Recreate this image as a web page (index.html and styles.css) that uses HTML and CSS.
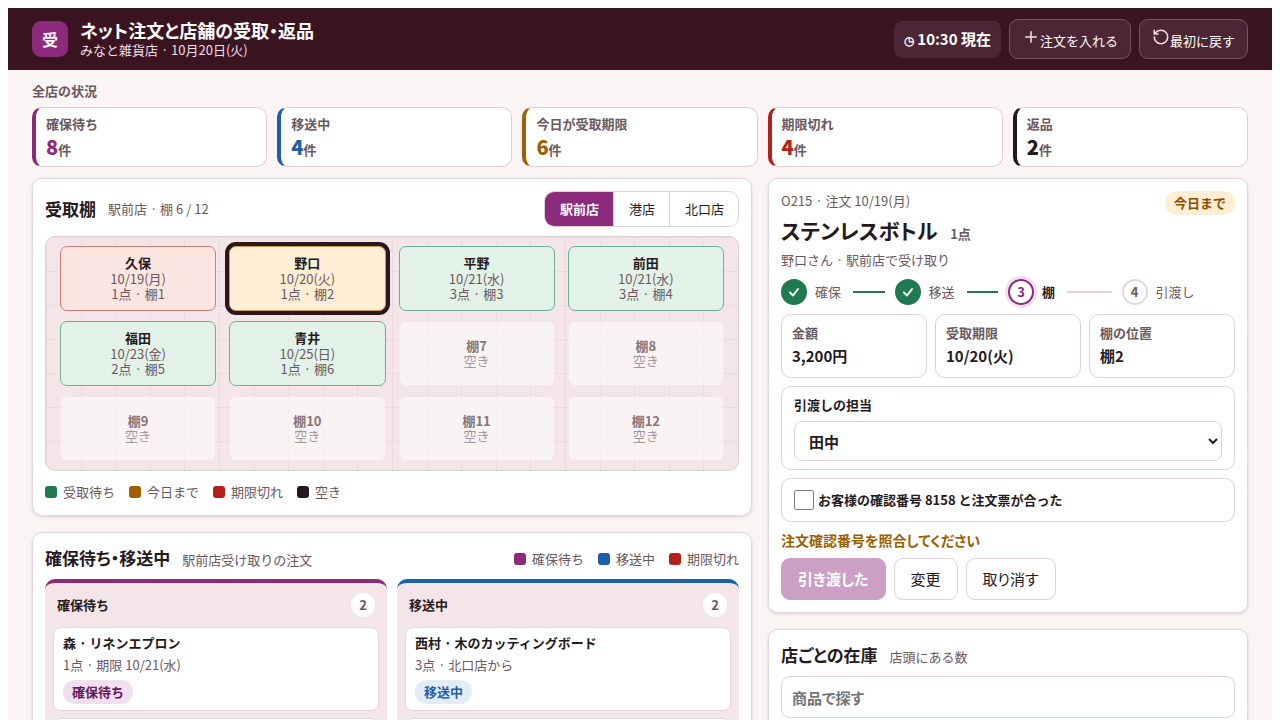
FILE: index.html
```html
<!DOCTYPE html>
<html lang="ja">
<head>
<meta charset="utf-8">
<meta name="viewport" content="width=device-width, initial-scale=1">
<title>ネット注文と店舗の受取・返品</title>
<link rel="stylesheet" href="styles.css">
</head>
<body>
<div class="app">
  <header class="topbar">
    <div class="logo">受</div>
    <div class="brand">
      <h1 class="brand-title">ネット注文と店舗の受取・返品</h1>
      <p class="brand-sub">みなと雑貨店 · 10月20日(火)</p>
    </div>
    <div class="clock"><span class="clock-icon">◷</span> 10:30 現在</div>
    <button class="top-btn" type="button"><svg class="icon" viewBox="0 0 24 24" aria-hidden="true"><path d="M5 12h14M12 5v14"/></svg>注文を入れる</button>
    <button class="top-btn" type="button"><svg class="icon" viewBox="0 0 24 24" aria-hidden="true"><path d="M3 12a9 9 0 1 0 9-9 9.750 9.750 0 0 0-6.740 2.740L3 8M3 3v5h5"/></svg>最初に戻す</button>
  </header>

  <main class="main">
    <h2 class="overview-title">全店の状況</h2>
    <div class="stats">
      <div class="stat purple"><span class="stat-label">確保待ち</span><span class="stat-value"><b class="stat-num">8</b>件</span></div>
      <div class="stat blue"><span class="stat-label">移送中</span><span class="stat-value"><b class="stat-num">4</b>件</span></div>
      <div class="stat amber"><span class="stat-label">今日が受取期限</span><span class="stat-value"><b class="stat-num">6</b>件</span></div>
      <div class="stat red"><span class="stat-label">期限切れ</span><span class="stat-value"><b class="stat-num">4</b>件</span></div>
      <div class="stat ink"><span class="stat-label">返品</span><span class="stat-value"><b class="stat-num">2</b>件</span></div>
    </div>

    <div class="columns">
      <div class="stack">
        <section class="panel">
          <div class="panel-head tall">
            <h2 class="panel-title">受取棚</h2>
            <span class="muted">駅前店 · 棚 6 / 12</span>
            <div class="segments">
              <button class="segment active" type="button" aria-pressed="true">駅前店</button>
              <button class="segment" type="button" aria-pressed="false">港店</button>
              <button class="segment" type="button" aria-pressed="false">北口店</button>
            </div>
          </div>
          <div class="rack">
            <button class="slot late" type="button"><b class="slot-name">久保</b><span>10/19(月)</span><span>1点 · 棚1</span></button>
            <button class="slot today selected" type="button"><b class="slot-name">野口</b><span>10/20(火)</span><span>1点 · 棚2</span></button>
            <button class="slot ready" type="button"><b class="slot-name">平野</b><span>10/21(水)</span><span>3点 · 棚3</span></button>
            <button class="slot ready" type="button"><b class="slot-name">前田</b><span>10/21(水)</span><span>3点 · 棚4</span></button>
            <button class="slot ready" type="button"><b class="slot-name">福田</b><span>10/23(金)</span><span>2点 · 棚5</span></button>
            <button class="slot ready" type="button"><b class="slot-name">青井</b><span>10/25(日)</span><span>1点 · 棚6</span></button>
            <button class="slot empty" type="button" disabled><b>棚7</b><span class="vacant">空き</span></button>
            <button class="slot empty" type="button" disabled><b>棚8</b><span class="vacant">空き</span></button>
            <button class="slot empty" type="button" disabled><b>棚9</b><span class="vacant">空き</span></button>
            <button class="slot empty" type="button" disabled><b>棚10</b><span class="vacant">空き</span></button>
            <button class="slot empty" type="button" disabled><b>棚11</b><span class="vacant">空き</span></button>
            <button class="slot empty" type="button" disabled><b>棚12</b><span class="vacant">空き</span></button>
          </div>
          <ul class="legend rack-legend">
            <li class="key green">受取待ち</li>
            <li class="key amber">今日まで</li>
            <li class="key red">期限切れ</li>
            <li class="key ink">空き</li>
          </ul>
        </section>

        <section class="panel">
          <div class="panel-head">
            <h2 class="panel-title">確保待ち・移送中</h2>
            <span class="muted">駅前店受け取りの注文</span>
            <ul class="legend push">
              <li class="key purple">確保待ち</li>
              <li class="key blue">移送中</li>
              <li class="key red">期限切れ</li>
            </ul>
          </div>
          <div class="lanes">
            <div class="lane purple">
              <div class="lane-head"><h3 class="lane-title">確保待ち</h3><span class="count">2</span></div>
              <article class="ticket">
                <b class="ticket-title">森 · リネンエプロン</b>
                <span class="muted">1点 · 期限 10/21(水)</span>
                <span class="pill purple-pill">確保待ち</span>
              </article>
              <article class="ticket"></article>
            </div>
            <div class="lane blue">
              <div class="lane-head"><h3 class="lane-title">移送中</h3><span class="count">2</span></div>
              <article class="ticket">
                <b class="ticket-title">西村 · 木のカッティングボード</b>
                <span class="muted">3点 · 北口店から</span>
                <span class="pill blue-pill">移送中</span>
              </article>
              <article class="ticket"></article>
            </div>
          </div>
        </section>
      </div>

      <div class="stack">
        <section class="panel order">
          <div class="order-head">
            <div>
              <p class="muted">O215 · 注文 10/19(月)</p>
              <h2 class="order-title">ステンレスボトル <span class="order-qty">1点</span></h2>
              <p class="muted">野口さん · 駅前店で受け取り</p>
            </div>
            <span class="pill amber-pill">今日まで</span>
          </div>
          <ol class="steps">
            <li class="step done"><span class="dot"><svg class="check" viewBox="0 0 14 14" aria-hidden="true"><path d="M3 7.5l3 3 5-6.500"/></svg></span>確保</li>
            <li class="step done"><span class="dot"><svg class="check" viewBox="0 0 14 14" aria-hidden="true"><path d="M3 7.5l3 3 5-6.500"/></svg></span>移送</li>
            <li class="step current"><span class="dot">3</span>棚</li>
            <li class="step"><span class="dot">4</span>引渡し</li>
          </ol>
          <dl class="facts">
            <div class="fact"><dt class="fact-label">金額</dt><dd class="fact-value">3,200円</dd></div>
            <div class="fact"><dt class="fact-label">受取期限</dt><dd class="fact-value">10/20(火)</dd></div>
            <div class="fact"><dt class="fact-label">棚の位置</dt><dd class="fact-value">棚2</dd></div>
          </dl>
          <div class="box">
            <label class="field-label" for="staff">引渡しの担当</label>
            <select class="field-select" id="staff"><option>田中</option></select>
          </div>
          <div class="box check-row">
            <input class="tick" type="checkbox" id="match">
            <label for="match">お客様の確認番号 8158 と注文票が合った</label>
          </div>
          <p class="warning">注文確認番号を照合してください</p>
          <div class="actions">
            <button class="action primary" type="button" disabled>引き渡した</button>
            <button class="action" type="button">変更</button>
            <button class="action" type="button">取り消す</button>
          </div>
        </section>

        <section class="panel">
          <div class="panel-head">
            <h2 class="panel-title">店ごとの在庫</h2>
            <span class="muted">店頭にある数</span>
          </div>
          <input class="search" type="search" placeholder="商品で探す" aria-label="商品で探す">
        </section>
      </div>
    </div>
  </main>
</div>
</body>
</html>
```
FILE: styles.css
```css
:root {
  --purple: #8c2a7c;
  --blue: #1f5fa8;
  --amber: #a05f00;
  --red: #b32018;
  --green: #1f7a50;
  --ink: #241a1e;
  --muted: #6b585e;
  --line: #dfd0d4;
  --tint: #f4e6e8;
}

*, *::before, *::after { box-sizing: border-box; }

body {
  margin: 8px 8px 0;
  font-family: "Noto Sans CJK JP", sans-serif;
  font-size: 13px;
  line-height: 20px;
  color: var(--ink);
}

h1, h2, h3, p, ul, ol, dl, dd { margin: 0; padding: 0; }
ul, ol { list-style: none; }
button, input, select { font: inherit; color: inherit; }

.brand-title, .panel-title, .order-title, .warning, .action, .search {
  font-feature-settings: "palt";
}

.app { height: calc(100vh - 8px); overflow: hidden; background: #faf4f5; }

.topbar {
  display: flex;
  align-items: center;
  gap: 8px;
  padding: 11px 24px;
  background: #3b1422;
  color: #fff;
}
.logo {
  width: 36px;
  height: 36px;
  border-radius: 9px;
  background: var(--purple);
  font-size: 16px;
  font-weight: 700;
  line-height: 36px;
  text-align: center;
}
.brand { flex: 1; margin-left: 4px; }
.brand-title { font-size: 18px; line-height: 22px; }
.brand-sub { line-height: 18px; color: #f3dfe6; }
.clock {
  padding: 8px 10px;
  border-radius: 8px;
  background: #4d2636;
  font-size: 15px;
  font-weight: 700;
}
.clock-icon { font-size: 12px; }
.top-btn {
  height: 40px;
  padding: 0 12px;
  border: 1px solid #75525f;
  border-radius: 9px;
  background: #4d2636;
}
.icon {
  width: 18px;
  height: 18px;
  vertical-align: baseline;
  fill: none;
  stroke: #f3dfe6;
  stroke-width: 2;
  stroke-linecap: round;
  stroke-linejoin: round;
}

.main { padding: 11px 24px 24px; }
.overview-title { margin-bottom: 6px; font-size: 13px; color: var(--muted); }

.purple { --tone: var(--purple); }
.blue { --tone: var(--blue); }
.amber { --tone: var(--amber); }
.red { --tone: var(--red); }
.ink { --tone: var(--ink); }
.green { --tone: var(--green); }

.stats { display: grid; grid-template-columns: repeat(5, 1fr); gap: 10px; }
.stat {
  display: flex;
  flex-direction: column;
  padding: 6px 10px 4px;
  border: 1px solid var(--line);
  border-left: 4px solid var(--tone);
  border-radius: 10px;
  background: #fff;
  color: var(--muted);
  font-weight: 700;
}
.stat-value { line-height: 25px; }
.stat-num { font-size: 20px; color: var(--tone); }

.columns {
  display: grid;
  grid-template-columns: 3fr 2fr;
  align-items: start;
  gap: 16px;
  margin-top: 11px;
}
.stack { display: grid; gap: 16px; }
.panel {
  padding: 12px;
  border: 1px solid #e6d8dc;
  border-radius: 10px;
  background: #fff;
  box-shadow: 0 1px 3px rgba(59, 20, 34, 0.16);
}
.panel-head { display: flex; align-items: baseline; gap: 12px; margin-bottom: 8px; }
.tall { align-items: center; margin-bottom: 9px; }
.panel-title { font-size: 17px; line-height: 26px; }
.muted { color: var(--muted); }
.push { margin-left: auto; }

.segments {
  display: flex;
  margin-left: auto;
  border: 1px solid var(--line);
  border-radius: 10px;
  overflow: hidden;
}
.segment {
  height: 34px;
  padding: 0 14px 0 15px;
  border: 0;
  border-left: 1px solid var(--line);
  background: #fff;
}
.segment.active { border-left: 0; background: var(--purple); color: #fff; font-weight: 700; }

.rack {
  display: grid;
  grid-template-columns: repeat(4, 1fr);
  gap: 10px 13px;
  padding: 9px 14px;
  border: 1px solid var(--line);
  border-radius: 10px;
  background:
    repeating-linear-gradient(90deg, #e9dade 0 1px, transparent 1px 25%),
    repeating-linear-gradient(90deg, #ecdce0 0 1px, transparent 1px 5%),
    repeating-linear-gradient(180deg, #ecdce0 0 1px, transparent 1px 34px),
    var(--tint);
}
.slot {
  display: flex;
  flex-direction: column;
  align-items: center;
  justify-content: center;
  height: 65px;
  padding: 0 0 2px;
  border: 1px solid;
  border-radius: 7px;
  line-height: 15px;
  color: var(--muted);
}
.slot-name { line-height: 16px; color: var(--ink); }
.late { background: #fbe5e1; border-color: #d17b78; }
.today { background: #fdeed5; border-color: #c99a4c; }
.ready { background: #e2f2e8; border-color: #6fae90; }
.selected { box-shadow: 0 0 0 4px #2a161c; }
.empty { background: rgba(255, 255, 255, 0.5); border-color: #f3e9eb; color: #86757a; }
.vacant { color: #a5949a; }

.legend { display: flex; gap: 14px; color: var(--muted); }
.rack-legend { margin: 11px 0 1px; }
.key { display: flex; align-items: center; gap: 6px; }
.key::before {
  content: "";
  width: 12px;
  height: 12px;
  border-radius: 3px;
  background: var(--tone);
}

.lanes { display: grid; grid-template-columns: 1fr 1fr; gap: 10px; }
.lane {
  display: grid;
  gap: 7px;
  padding: 8px;
  border-top: 4px solid var(--tone);
  border-radius: 10px;
  background: var(--tint);
}
.lane-head {
  display: flex;
  align-items: center;
  justify-content: space-between;
  padding: 2px 4px 3px;
}
.lane-title { font-size: 13px; }
.count {
  width: 24px;
  border-radius: 12px;
  background: #fff;
  color: var(--muted);
  font-weight: 700;
  line-height: 24px;
  text-align: center;
}
.ticket {
  display: flex;
  flex-direction: column;
  align-items: flex-start;
  gap: 2px;
  min-height: 84px;
  padding: 5px 9px 6px;
  border: 1px solid #e6d8dc;
  border-radius: 8px;
  background: #fff;
}
.pill { padding: 0 9px; border-radius: 12px; font-weight: 700; line-height: 24px; }
.ticket .pill { margin-top: 3px; }
.purple-pill { background: #f1dff0; color: #65195a; }
.blue-pill { background: #e2ecf7; color: var(--blue); }
.amber-pill { background: #fdeed5; color: #8a5200; }

.order { display: grid; gap: 8px; }
.order-head { display: flex; align-items: flex-start; justify-content: space-between; }
.order-title { margin: 4px 0 5px; font-size: 21px; line-height: 30px; }
.order-qty { margin-left: 8px; font-size: 13px; line-height: 20px; color: var(--muted); }

.steps { display: grid; grid-template-columns: repeat(4, 1fr); padding: 1px 0; }
.step { display: flex; align-items: center; gap: 8px; color: var(--muted); }
.step:not(:last-child)::after {
  content: "";
  flex: 1;
  height: 2px;
  margin: 0 10px 0 4px;
  background: #e6d0d7;
}
.step.done::after { background: #2b7557; }
.dot {
  display: grid;
  place-items: center;
  width: 26px;
  height: 26px;
  border: 2px solid #e3d8db;
  border-radius: 50%;
  font-weight: 700;
}
.done .dot { border-color: var(--green); background: var(--green); }
.current { color: var(--ink); font-weight: 700; }
.current .dot { border-color: var(--purple); color: var(--purple); box-shadow: 0 0 0 3px #f3dcf0; }
.check { width: 14px; height: 14px; fill: none; stroke: #fff; stroke-width: 2; stroke-linecap: round; stroke-linejoin: round; }

.facts { display: grid; grid-template-columns: repeat(3, 1fr); gap: 8px; }
.fact {
  padding: 8px 10px;
  border: 1px solid var(--line);
  border-radius: 10px;
  font-weight: 700;
}
.fact-label { color: var(--muted); }
.fact-value { font-size: 15px; line-height: 26px; }

.box { padding: 8px 12px; border: 1px solid var(--line); border-radius: 10px; font-weight: 700; }
.field-label { display: block; margin-bottom: 6px; line-height: 20px; }
.field-select {
  display: block;
  width: 100%;
  height: 40px;
  padding: 0 10px;
  border: 1px solid var(--line);
  border-radius: 8px;
  background: #fff;
  font-size: 15px;
}
.check-row { display: flex; align-items: center; gap: 4px; padding: 11px 12px; }
.tick { width: 20px; height: 20px; margin: 0; }
.warning { font-size: 14px; color: #9a5f00; font-weight: 700; }
.actions { display: flex; gap: 8px; }
.action {
  height: 42px;
  padding: 0 16px;
  border: 1px solid var(--line);
  border-radius: 9px;
  background: #fff;
  font-size: 15px;
}
.primary { border-color: #cba0c4; background: #cba0c4; color: #fff; font-weight: 700; }

.search {
  display: block;
  width: 100%;
  height: 42px;
  padding: 0 10px;
  border: 1px solid var(--line);
  border-radius: 9px;
  background: #fff;
  font-size: 15px;
  font-weight: 700;
}
.search::placeholder { color: #757575; }
```
